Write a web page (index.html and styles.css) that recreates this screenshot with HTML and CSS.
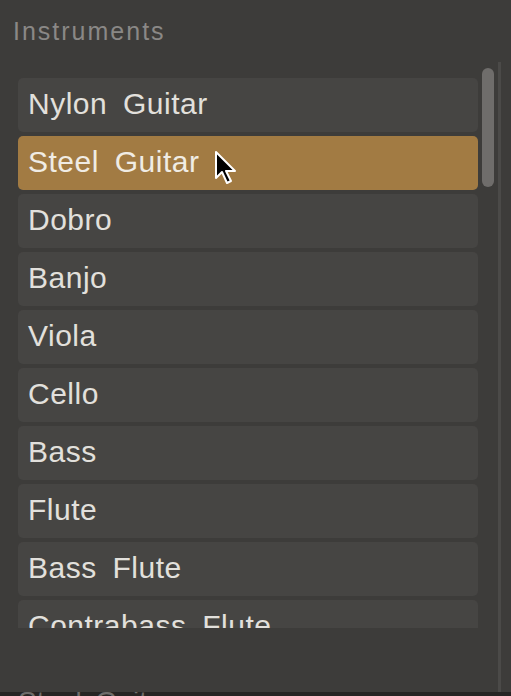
FILE: index.html
```html
<!DOCTYPE html>
<html>
<head>
<meta charset="utf-8">
<link rel="stylesheet" href="styles.css">
</head>
<body>
<div class="panel">
  <div class="title">Instruments</div>
  <div class="content">
    <div class="main">
      <div class="list">
        <div class="row">Nylon Guitar</div>
        <div class="row selected">Steel Guitar
          <svg class="cursor" width="26" height="36" viewBox="0 0 26 36"><path d="M2 2 L2 28 L8 22 L13 33 L17 31 L12 21 L21 21 Z" fill="#000" stroke="#fff" stroke-width="2" stroke-linejoin="round"/></svg>
        </div>
        <div class="row">Dobro</div>
        <div class="row">Banjo</div>
        <div class="row">Viola</div>
        <div class="row">Cello</div>
        <div class="row">Bass</div>
        <div class="row">Flute</div>
        <div class="row">Bass Flute</div>
        <div class="row">Contrabass Flute</div>
      </div>
      <div class="scroll"><div class="thumb"></div></div>
    </div>
    <div class="vline"></div>
  </div>
  <div class="strip"><span class="strip-text">Steel Guitar</span></div>
</div>
</body>
</html>
```

FILE: styles.css
```css
html, body {
  margin: 0;
  padding: 0;
  background: #3d3c3a;
  width: 511px;
  height: 696px;
  overflow: hidden;
  font-family: "Liberation Sans", Arial, sans-serif;
}
.panel {
  display: flex;
  flex-direction: column;
  height: 696px;
}
.title {
  flex: none;
  height: 62px;
  box-sizing: border-box;
  padding: 15px 0 0 13px;
  font-size: 25px;
  line-height: 32px;
  color: #8a8886;
  letter-spacing: 2px;
}
.content {
  flex: none;
  display: flex;
  height: 630px;
}
.main {
  display: flex;
  width: 498px;
  height: 630px;
}
.list {
  width: 460px;
  margin-left: 18px;
  height: 566px;
  overflow: hidden;
  padding-top: 16px;
  box-sizing: border-box;
  display: flex;
  flex-direction: column;
  gap: 4px;
}
.row {
  position: relative;
  flex: 0 0 54px;
  height: 54px;
  border-radius: 5px;
  background: #464543;
  color: #e2e0dc;
  font-size: 30px;
  line-height: 52px;
  padding-left: 10px;
  letter-spacing: 0.5px;
  word-spacing: 7px;
  box-sizing: border-box;
}
.row.selected {
  background: #a27b43;
  color: #f0ece4;
}
.cursor {
  position: absolute;
  left: 196px;
  top: 14px;
}
.scroll {
  width: 20px;
  padding: 6px 0 0 4px;
  box-sizing: border-box;
}
.thumb {
  width: 12px;
  height: 119px;
  border-radius: 6px;
  background: #6f6d6b;
}
.vline {
  width: 3px;
  height: 630px;
  background: #4b4a48;
}
.strip {
  flex: none;
  position: relative;
  height: 4px;
  background: #262524;
  overflow: hidden;
}
.strip-text {
  position: absolute;
  left: 18px;
  top: -4px;
  color: #6e6d6b;
  font-size: 28px;
  line-height: 28px;
  white-space: nowrap;
  word-spacing: 6px;
}
```
